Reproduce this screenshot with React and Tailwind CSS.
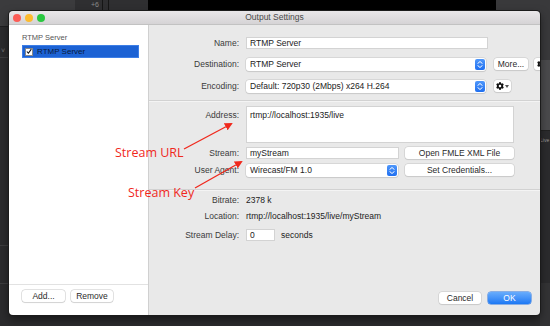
import React from 'react';
import { FaCog } from 'react-icons/fa';

const ui = { fontFamily: '"Liberation Sans", Arial, sans-serif' };

function Stepper() {
  return (
    <div className="w-[10px] h-[11px] rounded-[2px] bg-gradient-to-b from-[#4f97fa] to-[#1f6ff0] flex flex-col items-center justify-center gap-[1px]">
      <svg width="6" height="3" viewBox="0 0 6 3"><path d="M0.5 2.7 L3 0.5 L5.5 2.7" stroke="white" strokeWidth="1" fill="none" /></svg>
      <svg width="6" height="3" viewBox="0 0 6 3"><path d="M0.5 0.3 L3 2.5 L5.5 0.3" stroke="white" strokeWidth="1" fill="none" /></svg>
    </div>
  );
}

function Field({ children, className = '' }) {
  return (
    <div className={`h-[12px] shrink-0 bg-white border border-[#d3d3d3] flex items-center px-[3px] text-[8.5px] text-[#222] ${className}`}>
      {children}
    </div>
  );
}

function Select({ children, className = '' }) {
  return (
    <div className={`h-[13px] shrink-0 bg-white rounded-[3px] shadow-[0_0_0_0.5px_#c6c6c6,0_1px_1px_rgba(0,0,0,0.12)] flex items-center justify-between pl-[4px] pr-[1px] text-[8.5px] text-[#222] ${className}`}>
      <span>{children}</span>
      <Stepper />
    </div>
  );
}

function Button({ children, className = '' }) {
  return (
    <div className={`h-[12px] shrink-0 bg-white rounded-[3px] shadow-[0_0_0_0.5px_#c6c6c6,0_1px_1px_rgba(0,0,0,0.12)] flex items-center justify-center text-[8.5px] text-[#2a2a2a] ${className}`}>
      {children}
    </div>
  );
}

function Label({ children }) {
  return <div className="w-[91px] shrink-0 text-right text-[8.5px] text-[#3a3a3a] pr-[1px]">{children}</div>;
}

export default function App() {
  return (
    <div className="w-[550px] h-[326px] relative overflow-hidden bg-[#2b2b2d]" style={ui}>
      {/* app behind the dialog */}
      <div className="absolute left-0 top-0 w-[75px] h-[26px] bg-[#3b3b3d]" />
      <div className="absolute left-0 top-[26px] w-[9px] h-px bg-[#1e1e20]" />
      <div className="absolute left-[75px] top-0 w-[73px] h-[11px] bg-[#2f2f31] text-[7px] text-[#8a8a8a] pl-[16px]">+6</div>
      <div className="absolute left-[102px] top-0 w-px h-[11px] bg-[#161616]" />
      <div className="absolute left-[108px] top-0 w-px h-[11px] bg-[#161616]" />
      <div className="absolute left-[148px] top-0 w-[348px] h-[11px] bg-black" />
      <div className="absolute left-[496px] top-0 w-[54px] h-[60px] bg-[#39393b]" />
      <div className="absolute left-[540px] top-[60px] w-[10px] h-[70px] bg-[#4a4a4c]" />
      <div className="absolute left-[540px] top-[130px] w-[10px] h-px bg-[#222]" />
      <div className="absolute left-[540px] top-[137px] text-[5px] leading-[6px] text-[#9a9a9a]">Live</div>
      <div className="absolute left-[540px] top-[283px] w-[10px] h-[43px] bg-[#333335]" />
      <div className="absolute left-[1px] top-[46px] text-[7px] text-[#777]">˅</div>
      <div className="absolute left-0 top-[57px] w-[9px] h-px bg-[#3d3d3f]" />
      <div className="absolute left-0 top-[245px] w-[9px] h-px bg-[#3d3d3f]" />
      <div className="absolute left-0 top-[283px] w-[9px] h-px bg-[#3d3d3f]" />

      {/* dialog window */}
      <div className="absolute left-[9px] top-[11px] w-[531px] h-[304px] rounded-[4px] overflow-hidden flex flex-col shadow-[0_0_0_1px_#1b1b1b,0_4px_10px_rgba(0,0,0,0.5)]">
        <div className="h-[14px] shrink-0 relative flex items-center justify-center bg-gradient-to-b from-[#e9e7e9] to-[#d5d3d5] border-b border-[#c2c2c2]">
          <div className="absolute left-[4px] top-[3px] flex gap-[4px]">
            <div className="w-[8px] h-[8px] rounded-full bg-[#fc5d57]" />
            <div className="w-[8px] h-[8px] rounded-full bg-[#fdbb2e]" />
            <div className="w-[8px] h-[8px] rounded-full bg-[#29c840]" />
          </div>
          <span className="text-[8.5px] text-[#4a4a4a]">Output Settings</span>
        </div>

        <div className="flex-1 flex min-h-0">
          {/* sidebar */}
          <div className="w-[140px] shrink-0 bg-white border-r border-[#d0d0d0] flex flex-col">
            <div className="flex-1 pl-[13px] pr-[9px] pt-[7px]">
              <div className="text-[7.5px] text-[#555] h-[11px] leading-[11px]">RTMP Server</div>
              <div className="mt-[2px] h-[13px] bg-[#1c62d4] border border-[#3d7ee6] flex items-center pl-[2px]">
                <div className="w-[8px] h-[8px] bg-white border border-[#888] flex items-center justify-center">
                  <svg width="7" height="7" viewBox="0 0 7 7"><path d="M1 3.5 L2.8 5.5 L6.2 0.8" stroke="#111" strokeWidth="1.3" fill="none" /></svg>
                </div>
                <span className="ml-[4px] text-[8px] text-[#0a1a3a]">RTMP Server</span>
              </div>
            </div>
            <div className="h-[31px] border-t border-[#e2e2e2] flex items-start pt-[5px] pl-[13px] gap-[6px]">
              <Button className="w-[43px]">Add...</Button>
              <Button className="w-[42px]">Remove</Button>
            </div>
          </div>

          {/* main panel */}
          <div className="flex-1 min-w-0 overflow-hidden bg-[#e9e9e9] flex flex-col">
            <div className="pt-[12px] flex items-center">
              <Label>Name:</Label>
              <Field className="ml-[6px] w-[242px]">RTMP Server</Field>
            </div>
            <div className="mt-[8px] flex items-center">
              <Label>Destination:</Label>
              <Select className="ml-[6px] w-[240px]">RTMP Server</Select>
              <Button className="ml-[8px] w-[34px]">More...</Button>
              <Button className="ml-[6px] w-[14px]"><FaCog size={8} color="#111" /></Button>
            </div>
            <div className="mt-[9px] flex items-center">
              <Label>Encoding:</Label>
              <Select className="ml-[6px] w-[240px]">Default: 720p30 (2Mbps) x264 H.264</Select>
              <Button className="ml-[8px] w-[17px] gap-[1px]">
                <FaCog size={8} color="#111" />
                <svg width="4" height="3" viewBox="0 0 4 3"><path d="M0 0 L4 0 L2 3 Z" fill="#555" /></svg>
              </Button>
            </div>
            <div className="mt-[7px] h-px bg-[#d2d2d2] border-b border-[#f4f4f4] box-content" />
            <div className="mt-[4px] flex items-start">
              <div className="pt-[3px]"><Label>Address:</Label></div>
              <div className="ml-[6px] w-[268px] h-[37px] shrink-0 bg-white border border-[#d3d3d3] px-[3px] pt-[2px] text-[8.5px] text-[#222]">
                rtmp://localhost:1935/live
              </div>
            </div>
            <div className="mt-[4px] flex items-center">
              <Label>Stream:</Label>
              <Field className="ml-[6px] w-[153px]">myStream</Field>
              <Button className="ml-[6px] w-[109px]">Open FMLE XML File</Button>
            </div>
            <div className="mt-[4px] flex items-center">
              <Label>User Agent:</Label>
              <Select className="ml-[6px] w-[152px]">Wirecast/FM 1.0</Select>
              <Button className="ml-[7px] w-[109px]">Set Credentials...</Button>
            </div>
            <div className="mt-[12px] h-px bg-[#d2d2d2] border-b border-[#f4f4f4] box-content" />
            <div className="mt-[4px] h-[12px] flex items-center">
              <Label>Bitrate:</Label>
              <span className="ml-[6px] text-[8.5px] text-[#222]">2378 k</span>
            </div>
            <div className="mt-[4px] h-[12px] flex items-center">
              <Label>Location:</Label>
              <span className="ml-[6px] text-[8.5px] text-[#222]">rtmp://localhost:1935/live/myStream</span>
            </div>
            <div className="mt-[6px] flex items-center">
              <Label>Stream Delay:</Label>
              <Field className="ml-[6px] w-[29px]">0</Field>
              <span className="ml-[6px] text-[8.5px] text-[#222]">seconds</span>
            </div>
            <div className="flex-1" />
            <div className="flex justify-end gap-[7px] pr-[9px] pb-[11px]">
              <Button className="w-[42px]">Cancel</Button>
              <div className="w-[43px] h-[12px] rounded-[3px] bg-gradient-to-b from-[#68acfc] to-[#1a78f4] flex items-center justify-center text-[8.5px] text-white shadow-[0_0_0_0.5px_#2a74e0]">OK</div>
            </div>
          </div>
        </div>
      </div>

      {/* annotations */}
      <svg className="absolute left-0 top-0" width="550" height="326" viewBox="0 0 550 326">
        <defs>
          <marker id="ah" markerWidth="8" markerHeight="8" refX="6" refY="4" orient="auto" markerUnits="userSpaceOnUse">
            <path d="M0 0 L8 4 L0 8 Z" fill="#f0281c" />
          </marker>
        </defs>
        <line x1="184" y1="149" x2="231" y2="124" stroke="#f0281c" strokeWidth="1.3" markerEnd="url(#ah)" />
        <line x1="195" y1="188" x2="241" y2="162" stroke="#f0281c" strokeWidth="1.3" markerEnd="url(#ah)" />
      </svg>
      <div className="absolute left-[115px] top-[145px] text-[12.5px] leading-[16px] text-[#f0281c]" style={{ fontFamily: '"Open Sans", sans-serif' }}>Stream URL</div>
      <div className="absolute left-[128px] top-[185px] text-[12.5px] leading-[16px] text-[#f0281c]" style={{ fontFamily: '"Open Sans", sans-serif' }}>Stream Key</div>
    </div>
  );
}
